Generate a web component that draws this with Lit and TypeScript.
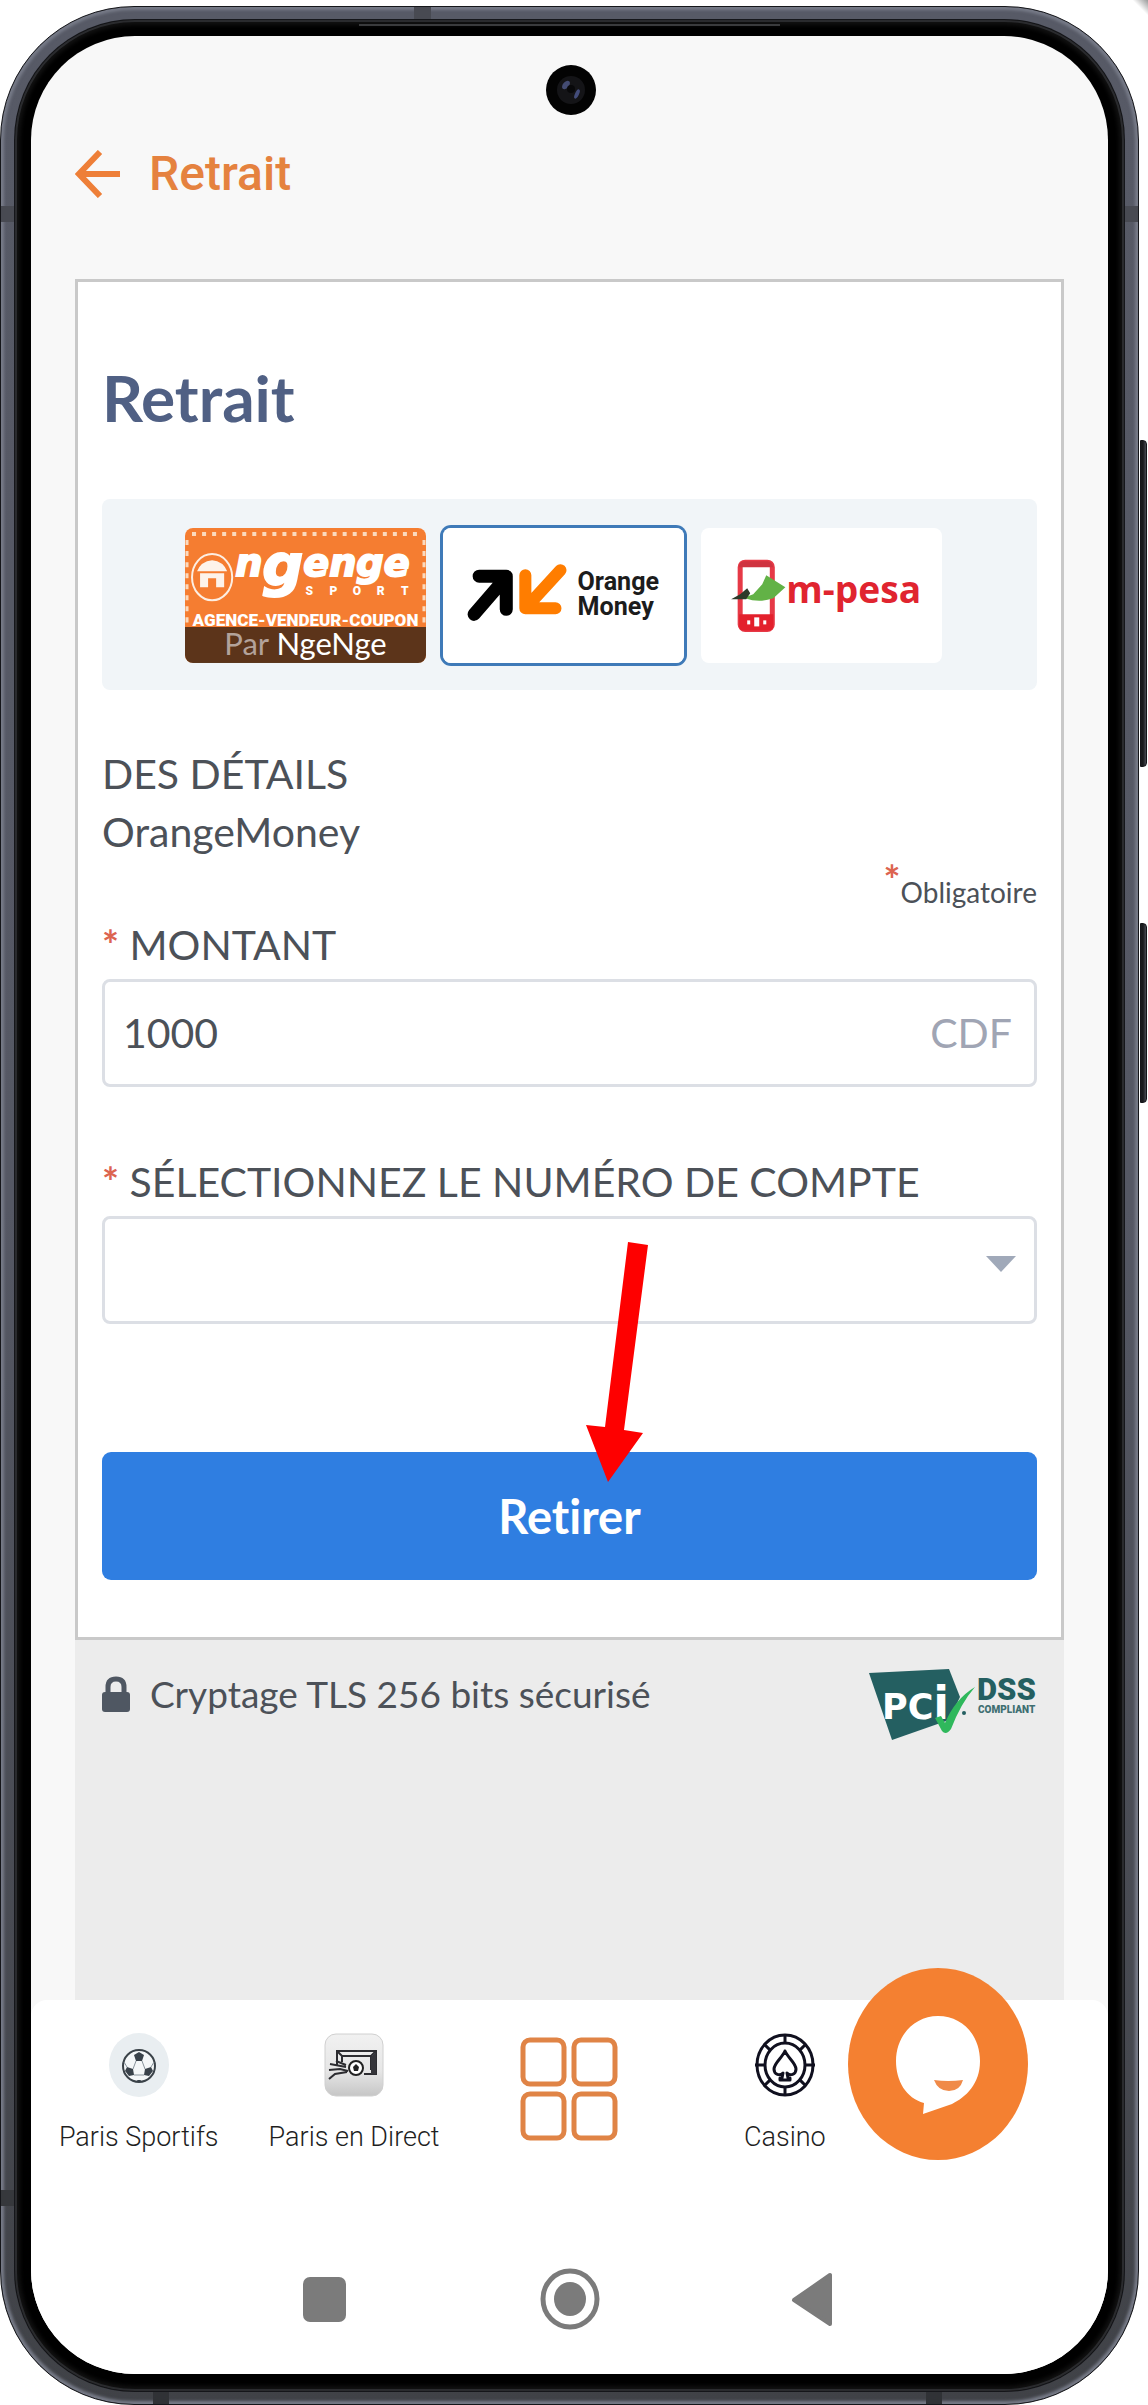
import { LitElement, html, css, svg } from "lit";
import { customElement, property, state } from "lit/decorators.js";
import { classMap } from "lit/directives/class-map.js";

const ngengeLogo = html`<svg class="art" viewBox="0 0 240 134" preserveAspectRatio="none" aria-hidden="true">
  <rect width="240" height="134" fill="#f57d31" />
  <g fill="none" stroke="#fbd9bd" stroke-width="4">
    <path d="M7 6H236" stroke-dasharray="4 6" />
    <path d="M2 12V96M238 12V96" stroke-width="3" stroke-dasharray="5 6" />
  </g>
  <ellipse cx="27" cy="49" rx="20" ry="23" fill="none" stroke="#fdeee2" stroke-width="2" />
  <path d="M12 43Q16 33 27 32Q38 33 42 43Z M15 45H39V59H31V50H23V59H15Z" fill="#fdf3ea" />
  <text x="50" y="48" fill="#fff" stroke="#fff" stroke-width="2" font-family="DejaVu Sans, sans-serif" font-weight="700" font-style="italic" font-size="38">n<tspan dy="9" font-size="57">g</tspan><tspan dy="-9">enge</tspan></text>
  <text x="120 144 167 191 215" y="67" fill="#fff" font-family="Roboto, sans-serif" font-weight="900" font-size="12">SPORT</text>
  <text x="120" y="98" text-anchor="middle" fill="#fff" font-family="Roboto, sans-serif" font-weight="900" font-size="17">AGENCE-VENDEUR-COUPON</text>
</svg>`;

const orangeLogo = html`<svg class="art" viewBox="0 0 240 134" aria-hidden="true">
  <g fill="none" stroke-linejoin="round" stroke-linecap="round">
    <path d="M36 48H63V81M62 50L31 86" stroke="#000" stroke-width="13" />
    <path d="M82 47V80H112M83 79L117 42" stroke="#ff7d00" stroke-width="12" />
  </g>
  <g font-family="Roboto, sans-serif" font-weight="700" font-size="25" fill="#1c1c1c">
    <text x="134" y="62">Orange</text>
    <text x="134" y="87">Money</text>
  </g>
</svg>`;

const mpesaLogo = html`<svg class="art" viewBox="0 0 240 134" aria-hidden="true">
  <rect x="39" y="34" width="32" height="67" rx="5" fill="#fff" stroke="#e63946" stroke-width="5" />
  <path d="M38 86H72V98Q72 102 67 102H43Q38 102 38 98Z" fill="#e3202c" />
  <path d="M38 39V37Q39 33 44 33H66Q71 33 72 39Z" fill="#cf3340" />
  <g fill="#fff"><rect x="46" y="92" width="3" height="4" /><rect x="53" y="89" width="5" height="9" /><rect x="62" y="92" width="3" height="4" /></g>
  <path d="M44 69L52 66L61 56L65 47L84 59L72 70Q58 75 44 70Z" fill="#62b246" />
  <path d="M30 71L39 66L46 60L49 65L45 71Z" fill="#2d3a2a" />
  <text x="85" y="75" font-family="Open Sans, sans-serif" font-weight="700" font-size="37" fill="#e0242f">m-pesa</text>
</svg>`;

const pciLogo = html`<svg class="pci" viewBox="0 0 168 72" role="img" aria-label="PCI DSS Compliant">
  <path d="M0 4L80 0L91 28L80 51L23 71Z" fill="#245f61" />
  <text x="13" y="50" font-family="DejaVu Sans, sans-serif" font-weight="700" font-size="35" fill="#fff">PC<tspan font-size="46">i</tspan></text>
  <path d="M66 49L72 47L76 54Q86 30 106 18Q92 34 82 60Q77 67 73 62Z" fill="#2fb85c" />
  <circle cx="95" cy="44" r="2" fill="#245f61" />
  <text x="108" y="31" font-family="Roboto, sans-serif" font-weight="900" font-size="31" fill="#245f61">DSS</text>
  <text x="109" y="44" font-family="Roboto, sans-serif" font-weight="900" font-size="10" fill="#3f6f71">COMPLIANT</text>
</svg>`;

const ballIcon = html`<svg class="tab-art" viewBox="0 0 60 64" aria-hidden="true">
  <ellipse cx="30" cy="32" rx="30" ry="32" fill="#e9eef1" />
  <circle cx="30" cy="33" r="16" fill="#f4f7f8" stroke="#3a4248" stroke-width="2" />
  <g fill="#39424a">
    <path d="M30 19L35 22L33 28H27L25 22Z" />
    <path d="M18 34L24 36L25 42L20 43L16 38Z" />
    <path d="M42 34L36 36L35 42L40 43L44 38Z" />
    <path d="M28 47H32L31 49H29Z" />
  </g>
  <path d="M27 28L24 36M33 28L36 36M25 42H35M15 29L18 34M45 29L42 34" fill="none" stroke="#87929a" stroke-width="1" />
</svg>`;

const goalIcon = html`<svg class="tab-art" viewBox="0 0 60 64" aria-hidden="true">
  <defs><linearGradient id="tile" x1="0" y1="0" x2="0" y2="1"><stop offset="0" stop-color="#f1f1f1" /><stop offset=".6" stop-color="#e6e6e6" /><stop offset="1" stop-color="#c6c6c6" /></linearGradient></defs>
  <rect x="1" y="1" width="58" height="62" rx="11" fill="url(#tile)" stroke="#d0d0d0" />
  <path d="M13 32V18H52V41H40M13 18L18 23H47L52 18M47 23V37M18 23V29" fill="none" stroke="#2c2c30" stroke-width="2" />
  <path d="M47 24L52 19V41H47Z" fill="#35353a" />
  <circle cx="32" cy="35" r="7" fill="#fff" stroke="#222" stroke-width="2" />
  <path d="M32 31L35 34L34 38H30L29 34Z" fill="#222" />
  <path d="M6 31L22 34M5 37L16 36L24 38M5 46L11 41L23 39M12 28L22 32" fill="none" stroke="#2c2c30" stroke-width="2" />
</svg>`;

const gridIcon = html`<svg class="grid-art" viewBox="0 0 98 104" aria-hidden="true">
  <g fill="none" stroke="#e08446" stroke-width="5">
    <rect x="3" y="3" width="41" height="44" rx="7" /><rect x="54" y="3" width="41" height="44" rx="7" />
    <rect x="3" y="57" width="41" height="44" rx="7" /><rect x="54" y="57" width="41" height="44" rx="7" />
  </g>
</svg>`;

const spokes = [0, 45, 90, 135, 180, 225, 270, 315];
const chipIcon = html`<svg class="tab-art" viewBox="0 0 60 64" aria-hidden="true">
  <g fill="none" stroke="#10101f" stroke-width="3">
    <ellipse cx="30" cy="32" rx="28" ry="30" />
    <ellipse cx="30" cy="32" rx="20" ry="22" />
    ${spokes.map((a) => svg`<path d="M30 2V11" transform="rotate(${a} 30 32)" />`)}
    <path stroke-linejoin="round" d="M30 18C27 25 19 30 19 36C19 42 25 43 28 40L27 45H25V47H35V45H33L32 40C35 43 41 42 41 36C41 30 33 25 30 18Z" />
  </g>
</svg>`;

@customElement("pay-method")
export class PayMethod extends LitElement {
  @property() name = "";
  @property({ type: Boolean }) selected = false;
  @property({ attribute: false }) art: unknown;
  @property({ attribute: false }) caption: unknown;

  static styles = css`
    :host { display: block; flex: 0 1 241px; }
    .tile { display: block; position: relative; width: 100%; padding: 0; border: 0; border-radius: 8px; background: #fff; overflow: hidden; cursor: pointer; font-family: Lato, sans-serif; }
    .holder { border-radius: 8px; }
    .selected { box-shadow: 0 0 0 3px #3f7ab8; }
    .art { display: block; width: 100%; }
    .caption { position: absolute; inset: auto 0 0; padding-bottom: 3px; background: rgba(82, 48, 24, 0.94); color: #fff; font-size: 31px; line-height: 33px; text-align: center; }
    .by { color: #b3a29a; }
  `;

  render() {
    return html`<div class=${classMap({ holder: true, selected: this.selected })}>
      <button class="tile" type="button" aria-pressed=${this.selected} aria-label=${this.name}>
        ${this.art}
        ${this.caption ? html`<span class="caption"><span class="by">Par</span> ${this.caption}</span>` : ""}
      </button>
    </div>`;
  }
}

@customElement("app-root")
export class AppRoot extends LitElement {
  @state() private method = "orange";
  @state() private amount = "1000";

  private methods = [
    { id: "ngenge", name: "NgeNge", art: ngengeLogo, caption: "NgeNge" },
    { id: "orange", name: "OrangeMoney", art: orangeLogo, caption: "" },
    { id: "mpesa", name: "m-pesa", art: mpesaLogo, caption: "" },
  ];

  private tabs = [
    { label: "Paris Sportifs", art: ballIcon },
    { label: "Paris en Direct", art: goalIcon },
    { label: "", art: gridIcon },
    { label: "Casino", art: chipIcon },
  ];

  static styles = css`
    :host { display: block; position: relative; overflow: hidden; background: #fff; font-family: Lato, "Open Sans", sans-serif; font-variant-ligatures: none; color: #4c5158; }
    * { box-sizing: border-box; }
    a { color: inherit; text-decoration: none; }
    button { font: inherit; cursor: pointer; }

    .phone { position: relative; margin: 6px 9px 0 0; padding: 13px 14px; border: 1px solid #15161a; border-radius: 134px; background: linear-gradient(#575a66, #555864 50%, #404247); box-shadow: inset 0 0 3px 3px #777b88; }
    .bezel { position: relative; padding: 16px 16px 17px; border-radius: 120px; background: #000; box-shadow: 0 0 0 1px #15161a, inset 0 0 0 2px #2a2b2e, inset 0 0 4px 5px #121212; }
    .screen { position: relative; border-radius: 104px; background: #f8f8f8; overflow: hidden; }
    .camera { position: absolute; top: 29px; left: 50%; width: 50px; height: 50px; margin-left: -24px; }
    .speaker { position: absolute; top: 4px; left: 31%; right: 31%; height: 2px; background: #3a3b3d; }
    .seam { position: absolute; background: #484a52; }
    .seam.left { left: 0; top: 199px; width: 14px; height: 16px; }
    .seam.right { right: 0; top: 199px; width: 14px; height: 16px; }
    .seam.low { left: 0; bottom: 198px; width: 14px; height: 16px; background: #36383c; }
    .seam.top { left: 413px; top: 0; width: 17px; height: 13px; }
    .seam.foot-a { left: 152px; bottom: 0; width: 16px; height: 13px; background: #303236; }
    .seam.foot-b { right: 196px; bottom: 0; width: 16px; height: 13px; background: #303236; }
    .key { position: absolute; right: 1px; width: 7px; border-radius: 0 4px 4px 0; background: linear-gradient(90deg, #191a1d 2px, #484a52); border: 1px solid #15161a; }
    .key.volume { top: 440px; height: 327px; }
    .key.power { top: 923px; height: 180px; }
    .smudge { position: absolute; top: -22px; right: -22px; width: 44px; height: 44px; background: linear-gradient(45deg, transparent 32%, #777 56%); }

    .header { padding: 102px 44px 69px; }
    .back { display: flex; align-items: center; gap: 29px; height: 72px; color: #e5823f; font: 500 48px/72px Roboto, sans-serif; }
    .back-art { width: 45px; height: 48px; }
    .page { margin: 0 44px; background: #ececec; }
    .card { margin: 0; padding: 76px 24px 57px; border: 3px solid #c9c9c9; background: #fff; }
    .title { margin: 0 0 61px; font-size: 64px; line-height: 80px; font-weight: 700; color: #506084; }
    .methods { display: flex; justify-content: center; gap: 17px; padding: 29px 12px 27px 0; border-radius: 8px; background: #f1f5f8; }
    .details { margin: 55px 0 0; font-size: 41px; line-height: 58px; }
    .line { margin: 0; }
    .required { margin: 11px 0 4px; font-size: 28px; line-height: 40px; text-align: right; }
    .star { color: #dc6450; font-size: 40px; line-height: 1px; font-weight: 700; }
    .required .star { position: relative; top: -8px; }
    .label { display: block; margin-bottom: 5px; font-size: 41px; line-height: 58px; }
    .field { display: flex; align-items: center; margin-bottom: 66px; height: 108px; padding: 0 22px 0 18px; border: 3px solid #dcdfe5; border-radius: 8px; background: #fff; }
    .amount { flex: 1; min-width: 0; padding: 0; border: 0; outline: 0; background: none; color: inherit; font: inherit; font-size: 41px; line-height: 58px; }
    .unit { color: #a0a5b4; font-size: 41px; line-height: 58px; }
    .field.pick { position: relative; margin-bottom: 128px; padding: 0; }
    .account { width: 100%; height: 100%; padding: 0 60px 0 18px; border: 0; background: none; appearance: none; color: inherit; font: inherit; font-size: 41px; }
    .caret { position: absolute; right: 18px; top: 37px; width: 30px; height: 16px; pointer-events: none; }
    .submit { display: block; width: 100%; height: 128px; border: 0; border-radius: 9px; background: #2f7ee1; color: #fff; font-size: 47px; font-weight: 700; }

    .secure { display: flex; justify-content: space-between; align-items: flex-start; min-height: 360px; padding: 29px 27px 0; }
    .tls { display: flex; align-items: center; gap: 20px; font-size: 37px; line-height: 50px; }
    .lock { width: 28px; height: 36px; }
    .pci { width: 168px; height: 72px; }

    .bottom { position: relative; background: #fff; border-radius: 16px 16px 0 0; }
    .tabs { display: grid; grid-template-columns: repeat(5, 1fr); padding: 33px 0 0; height: 155px; color: #1f1f1f; font: 300 27px/36px Roboto, sans-serif; }
    .tab { display: flex; flex-direction: column; align-items: center; gap: 22px; white-space: nowrap; }
    .tab-art { width: 60px; height: 64px; }
    .grid-art { width: 98px; height: 104px; margin-top: 4px; }
    .chat { position: absolute; top: -33px; right: 80px; width: 180px; height: 194px; padding: 0; border: 0; border-radius: 50%; background: none; }
    .chat-art { display: block; width: 180px; height: 194px; }
    .system { display: grid; grid-template-columns: repeat(3, 244px); justify-content: center; padding: 113px 0 43px; }
    .sys { display: flex; justify-content: center; align-items: center; height: 63px; padding: 0; border: 0; background: none; }
    .sys-art { width: 60px; height: 63px; }

    .pointer { position: absolute; left: 51%; top: 1241px; width: 64px; height: 242px; pointer-events: none; }
  `;

  render() {
    return html`
      <div class="smudge"></div>
      <div class="key volume"></div>
      <div class="key power"></div>
      <div class="phone">
        <i class="seam left"></i><i class="seam right"></i><i class="seam low"></i>
        <i class="seam top"></i><i class="seam foot-a"></i><i class="seam foot-b"></i>
        <div class="bezel">
          <div class="speaker"></div>
          <div class="screen">
            <svg class="camera" viewBox="0 0 50 50" aria-hidden="true">
              <circle cx="25" cy="25" r="25" fill="#030303" />
              <circle cx="25" cy="25" r="14" fill="#141417" />
              <ellipse cx="20" cy="20" rx="3" ry="5" transform="rotate(40 20 20)" fill="#434b72" />
              <ellipse cx="31" cy="29" rx="2" ry="5" transform="rotate(25 31 29)" fill="#434c7a" />
              <circle cx="25" cy="24" r="4" fill="#08080a" />
            </svg>
            <header class="header">
              <a class="back" href="#">
                <svg class="back-art" viewBox="0 0 45 48" aria-hidden="true">
                  <path d="M25 2L4 24L25 46M4 24H45" fill="none" stroke="#ee7f38" stroke-width="6" />
                </svg>
                <span>Retrait</span>
              </a>
            </header>
            <main class="page">
              <form class="card" @submit=${(e: Event) => e.preventDefault()}>
                <h1 class="title">Retrait</h1>
                <div class="methods">
                  ${this.methods.map(
                    (m) => html`<pay-method
                      .name=${m.name}
                      .art=${m.art}
                      .caption=${m.caption}
                      .selected=${this.method === m.id}
                      @click=${() => (this.method = m.id)}
                    ></pay-method>`
                  )}
                </div>
                <div class="details">
                  <p class="line">DES DÉTAILS</p>
                  <p class="line">OrangeMoney</p>
                </div>
                <p class="required"><span class="star">*</span>Obligatoire</p>
                <label class="label" for="amount"><span class="star">*</span> MONTANT</label>
                <div class="field">
                  <input class="amount" id="amount" inputmode="numeric" .value=${this.amount}
                    @input=${(e: Event) => (this.amount = (e.target as HTMLInputElement).value)} />
                  <span class="unit">CDF</span>
                </div>
                <label class="label" for="account"><span class="star">*</span> SÉLECTIONNEZ LE NUMÉRO DE COMPTE</label>
                <div class="field pick">
                  <select class="account" id="account"><option></option></select>
                  <svg class="caret" viewBox="0 0 30 16" aria-hidden="true"><path d="M0 0H30L15 16Z" fill="#a0a9b9" /></svg>
                </div>
                <button class="submit" type="submit">Retirer</button>
              </form>
              <div class="secure">
                <div class="tls">
                  <svg class="lock" viewBox="0 0 28 36" aria-hidden="true">
                    <path d="M6 17V11Q6 3 14 3Q22 3 22 11V17" fill="none" stroke="#4f5762" stroke-width="5" />
                    <rect x="0" y="16" width="28" height="20" rx="3" fill="#4f5762" />
                  </svg>
                  <span>Cryptage TLS 256 bits sécurisé</span>
                </div>
                ${pciLogo}
              </div>
            </main>
            <div class="bottom">
              <nav class="tabs">
                ${this.tabs.map(
                  (t) => html`<a class="tab" href="#" aria-label=${t.label || "Menu"}>${t.art}${t.label ? html`<span>${t.label}</span>` : ""}</a>`
                )}
              </nav>
              <button class="chat" type="button" aria-label="Chat">
                <svg class="chat-art" viewBox="0 0 180 194" aria-hidden="true">
                  <ellipse cx="90" cy="97" rx="90" ry="96" fill="#f48031" />
                  <path d="M90 49C115 49 132 69 132 94C132 117 118 130 104 137L75 147L76 136C58 131 48 114 48 94C48 69 66 49 90 49Z" fill="#fff" />
                  <path d="M86 113Q100 115 115 113Q112 124 101 124Q90 124 86 113Z" fill="#f08a48" />
                </svg>
              </button>
              <div class="system">
                <button class="sys" type="button" aria-label="Applications">
                  <svg class="sys-art" viewBox="0 0 60 63"><rect x="7" y="9" width="43" height="45" rx="7" fill="#7b7b7b" /></svg>
                </button>
                <button class="sys" type="button" aria-label="Accueil">
                  <svg class="sys-art" viewBox="0 0 60 63">
                    <ellipse cx="30" cy="31" rx="27" ry="28" fill="none" stroke="#7b7b7b" stroke-width="5" />
                    <ellipse cx="30" cy="31" rx="16" ry="17" fill="#7b7b7b" />
                  </svg>
                </button>
                <button class="sys" type="button" aria-label="Retour">
                  <svg class="sys-art" viewBox="0 0 60 63"><path d="M10 32L46 7V56Z" fill="#7b7b7b" stroke="#7b7b7b" stroke-width="4" stroke-linejoin="round" /></svg>
                </button>
              </div>
            </div>
          </div>
        </div>
      </div>
      <svg class="pointer" viewBox="0 0 64 242" aria-hidden="true">
        <path d="M43 1L63 4L39 189L58 192L23 241L1 184L20 186Z" fill="#fe0000" />
      </svg>
    `;
  }
}
